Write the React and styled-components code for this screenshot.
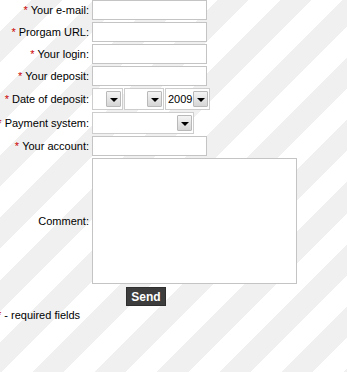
import React from "react";
import styled, { createGlobalStyle } from "styled-components";

const Global = createGlobalStyle`
  html, body {
    margin: 0;
    padding: 0;
    min-height: 100%;
  }
  body {
    font-family: Tahoma, "Liberation Sans", Arial, sans-serif;
    font-size: 11px;
    color: #000;
    background-color: #fff;
    background-image: repeating-linear-gradient(
      135deg,
      #ffffff 0px,
      #ffffff 22px,
      #f0f0f0 22px,
      #f0f0f0 44px
    );
    min-height: 372px;
    overflow: hidden;
  }
`;

const Page = styled.div`
  width: 347px;
  height: 372px;
`;

const Form = styled.form`
  margin-left: -5px;
  width: 302px;
  display: grid;
  grid-template-columns: 94px 205px;
  column-gap: 3px;
  row-gap: 2px;
`;

const Label = styled.label`
  display: flex;
  justify-content: flex-end;
  align-items: center;
  white-space: nowrap;
  font-size: 11px;
  color: #000;
`;

const Star = styled.span`
  color: #cc0000;
  margin-right: 3px;
`;

const Field = styled.div`
  display: flex;
  align-items: center;
  gap: ${(p) => p.$gap || 0}px;
`;

const TextInput = styled.input`
  box-sizing: border-box;
  width: 115px;
  height: 20px;
  margin: 0;
  padding: 1px 3px;
  border: 1px solid #c4c4c4;
  background: #fff;
  font: inherit;
  outline: none;
`;

const TextArea = styled.textarea`
  box-sizing: border-box;
  display: block;
  width: 205px;
  height: 126px;
  margin: 0;
  padding: 2px 3px;
  border: 1px solid #c4c4c4;
  background: #fff;
  font: inherit;
  resize: none;
  outline: none;
`;

const SelectBox = styled.div`
  box-sizing: border-box;
  width: ${(p) => p.$width}px;
  height: 22px;
  display: flex;
  align-items: center;
  border: 1px solid #cdcdcd;
  background: #fff;
  padding: 0 1px 0 2px;
`;

const SelectValue = styled.span`
  flex: 1;
  min-width: 0;
  font-size: 11px;
  color: #000;
  white-space: nowrap;
`;

const ArrowButton = styled.span`
  box-sizing: border-box;
  flex: none;
  width: 15px;
  height: 16px;
  display: flex;
  align-items: center;
  justify-content: center;
  border: 1px solid #b9b9b9;
  border-radius: 1px;
  background: linear-gradient(#f4f4f4, #d6d6d6);
  &::after {
    content: "";
    width: 0;
    height: 0;
    margin-top: 1px;
    border-left: 4px solid transparent;
    border-right: 4px solid transparent;
    border-top: 4px solid #000;
  }
`;

const SubmitRow = styled.div`
  grid-column: 1 / -1;
  display: flex;
  justify-content: center;
  padding-top: 1px;
`;

const SendButton = styled.button`
  box-sizing: border-box;
  height: 19px;
  margin: 0;
  padding: 0 4px;
  border: 1px solid #2e2e2e;
  background: #3d3d3d;
  color: #fff;
  font-family: Tahoma, "Liberation Sans", Arial, sans-serif;
  font-weight: bold;
  font-size: 12px;
  line-height: 16px;
  cursor: pointer;
`;

const Note = styled.div`
  margin: 3px 0 0 -3px;
  font-size: 11px;
  white-space: nowrap;
`;

function Select({ width, value }) {
  return (
    <SelectBox $width={width}>
      <SelectValue>{value}</SelectValue>
      <ArrowButton />
    </SelectBox>
  );
}

function Row({ label, required, children, gap }) {
  return (
    <>
      <Label>
        {required && <Star>*</Star>}
        {label}
      </Label>
      <Field $gap={gap}>{children}</Field>
    </>
  );
}

export default function App() {
  return (
    <Page>
      <Global />
      <Form onSubmit={(e) => e.preventDefault()}>
        <Row label="Your e-mail:" required>
          <TextInput />
        </Row>
        <Row label="Prorgam URL:" required>
          <TextInput />
        </Row>
        <Row label="Your login:" required>
          <TextInput />
        </Row>
        <Row label="Your deposit:" required>
          <TextInput />
        </Row>
        <Row label="Date of deposit:" required gap={1}>
          <Select width={31} value="" />
          <Select width={40} value="" />
          <Select width={45} value="2009" />
        </Row>
        <Row label="Payment system:" required>
          <Select width={102} value="" />
        </Row>
        <Row label="Your account:" required>
          <TextInput />
        </Row>
        <Row label="Comment:">
          <TextArea />
        </Row>
        <SubmitRow>
          <SendButton type="submit">Send</SendButton>
        </SubmitRow>
      </Form>
      <Note>
        <Star>*</Star>- required fields
      </Note>
    </Page>
  );
}
